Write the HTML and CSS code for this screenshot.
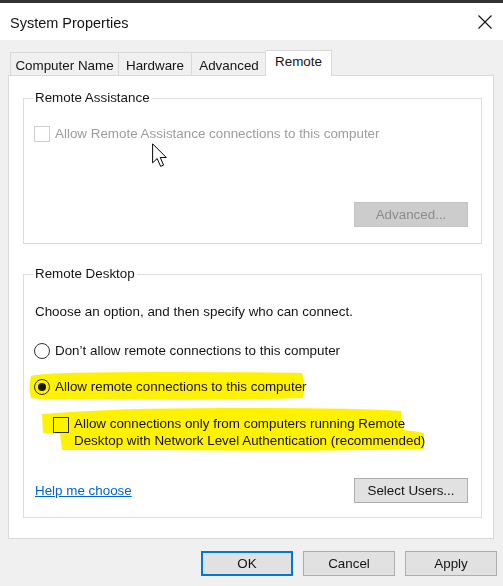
FILE: index.html
```html
<!DOCTYPE html>
<html>
<head>
<meta charset="utf-8">
<link rel="stylesheet" href="styles.css">
</head>
<body>
<div class="window">
  <div class="topbar"></div>
  <div class="titlebar">
    <span class="title">System Properties</span>
    <svg class="close" width="14" height="14" viewBox="0 0 14 14"><path d="M0.5 0.5 L13.5 13.5 M13.5 0.5 L0.5 13.5" stroke="#111" stroke-width="1.1" fill="none"/></svg>
  </div>
  <div class="content">
    <div class="tabs">
      <div class="tab tab-name">Computer Name</div>
      <div class="tab tab-hw">Hardware</div>
      <div class="tab tab-adv">Advanced</div>
      <div class="tab active">Remote</div>
    </div>
    <div class="panel">
      <fieldset class="group group-ra">
        <legend>Remote Assistance</legend>
        <div class="row disabled"><span class="check dis"></span><span>Allow Remote Assistance connections to this computer</span></div>
        <div class="btn btn-dis adv-btn">Advanced...</div>
      </fieldset>
      <fieldset class="group group-rd">
        <legend>Remote Desktop</legend>
        <div class="line">Choose an option, and then specify who can connect.</div>
        <div class="row r1"><span class="radio"></span><span>Don’t allow remote connections to this computer</span></div>
        <div class="row r2"><span class="radio on"></span><span>Allow remote connections to this computer</span></div>
        <div class="row2"><span class="check"></span><span class="two">Allow connections only from computers running Remote<br>Desktop with Network Level Authentication (recommended)</span></div>
        <div class="bottomrow"><a class="link">Help me choose</a><div class="btn">Select Users...</div></div>
      </fieldset>
    </div>
    <div class="buttons">
      <div class="btn dlg default">OK</div>
      <div class="btn dlg">Cancel</div>
      <div class="btn dlg">Apply</div>
    </div>
  </div>
  <svg class="marker" width="503" height="586" viewBox="0 0 503 586">
    <path d="M31 376 Q40 372 160 372 Q260 372 302 373 Q306 385 303 398 Q200 401 90 399 Q40 400 31 398 Q28 387 31 376 Z" fill="#fff200"/>
    <path d="M42 414 Q120 407 260 408 Q360 408 401 411 L403 430 Q415 431 424 433 L424 449 Q300 452 160 450 Q100 450 62 450 L60 434 Q50 433 43 433 Z" fill="#fff200"/>
  </svg>
  <svg class="cursor" width="16" height="25" viewBox="0 0 13 20"><path d="M0.5 0.5 V16 L4.2 12.5 L7 18.8 L9.4 17.8 L6.7 11.6 H11.6 Z" fill="#fff" stroke="#000" stroke-width="0.8" stroke-linejoin="miter"/></svg>
</div>
</body>
</html>
```
FILE: styles.css
```css
* { box-sizing: border-box; }
html, body { margin: 0; padding: 0; }
body {
  background: #f0f0f0;
  font-family: "Liberation Sans", Arial, sans-serif;
  font-size: 13.4px;
  color: #141414;
  width: 503px;
  height: 586px;
  overflow: hidden;
}
.window { position: relative; width: 503px; height: 586px; }
.topbar { height: 3px; background: #333; }
.titlebar {
  height: 37px;
  background: #fff;
  display: flex;
  align-items: center;
  justify-content: space-between;
  padding: 0 10px 0 10px;
}
.title { font-size: 14.5px; margin-top: 2px; }
.close { margin-right: 1px; margin-top: 1px; }
.content { padding: 10px 9px 0 8px; }
.tabs {
  display: flex;
  align-items: flex-end;
  height: 25px;
  padding-left: 2px;
}
.tab {
  height: 23px;
  border: 1px solid #d9d9d9;
  border-bottom: none;
  background: #f0f0f0;
  text-align: center;
  line-height: 21px;
  padding-top: 2px;
  position: relative;
}
.tab + .tab { margin-left: -1px; }
.tab-name { width: 109px; }
.tab-hw { width: 74px; }
.tab-adv { width: 76px; }
.tab.active {
  width: 67px;
  height: 26px;
  margin-left: -2px;
  margin-bottom: -1px;
  background: #fff;
  z-index: 1;
  padding-top: 0;
  line-height: 22px;
}
.panel {
  background: #fff;
  border: 1px solid #d9d9d9;
  height: 464px;
  padding: 0 11px 20px 14px;
}
.group {
  margin: 0;
  border: 1px solid #dcdcdc;
  display: flex;
  flex-direction: column;
  min-width: 0;
}
.group legend {
  padding: 0 2px;
  margin-left: -1px;
  line-height: 16px;
}
.group-ra { margin-top: 14px; padding: 20px 13px 16px 10px; }
.group-rd { margin-top: 22px; padding: 22px 13px 14px 10px; }
.row {
  display: flex;
  align-items: center;
  height: 16px;
  line-height: 16px;
  gap: 5px;
}
.disabled { color: #9d9d9d; }
.line { line-height: 16px; height: 16px; margin-left: 1px; }
.check {
  width: 16px;
  height: 16px;
  border: 1px solid #333;
  background: #fff;
  flex: none;
}
.check.dis { border-color: #cfcfcf; }
.radio {
  width: 16px;
  height: 16px;
  border: 1px solid #333;
  border-radius: 50%;
  background: #fff;
  flex: none;
  display: flex;
  align-items: center;
  justify-content: center;
}
.radio.on::after {
  content: "";
  width: 8px;
  height: 8px;
  border-radius: 50%;
  background: #1a1a1a;
}
.r1 { margin-top: 23px; }
.r2 { margin-top: 20px; }
.row2 {
  display: flex;
  align-items: flex-start;
  gap: 5px;
  margin-top: 20px;
  margin-left: 19px;
}
.row2 .check { margin-top: 2px; }
.two { line-height: 17px; }
.btn {
  height: 25px;
  width: 114px;
  border: 1px solid #adadad;
  background: #e1e1e1;
  display: flex;
  align-items: center;
  justify-content: center;
}
.adv-btn { align-self: flex-end; margin-top: 60px; }
.btn-dis { background: #cccccc; border-color: #c4c4c4; color: #8c8c8c; }
.bottomrow {
  margin-top: 29px;
  display: flex;
  justify-content: space-between;
  align-items: center;
}
.link { color: #0066cc; text-decoration: underline; margin-left: 1px; }
.buttons {
  display: flex;
  justify-content: flex-end;
  gap: 10px;
  margin-top: 12px;
  margin-right: -3px;
}
.btn.dlg { width: 92px; }
.btn.default { border: 2px solid #0078d7; }
.marker {
  position: absolute;
  left: 0;
  top: 0;
  mix-blend-mode: multiply;
  pointer-events: none;
}
.cursor { position: absolute; left: 152px; top: 143px; }
```
